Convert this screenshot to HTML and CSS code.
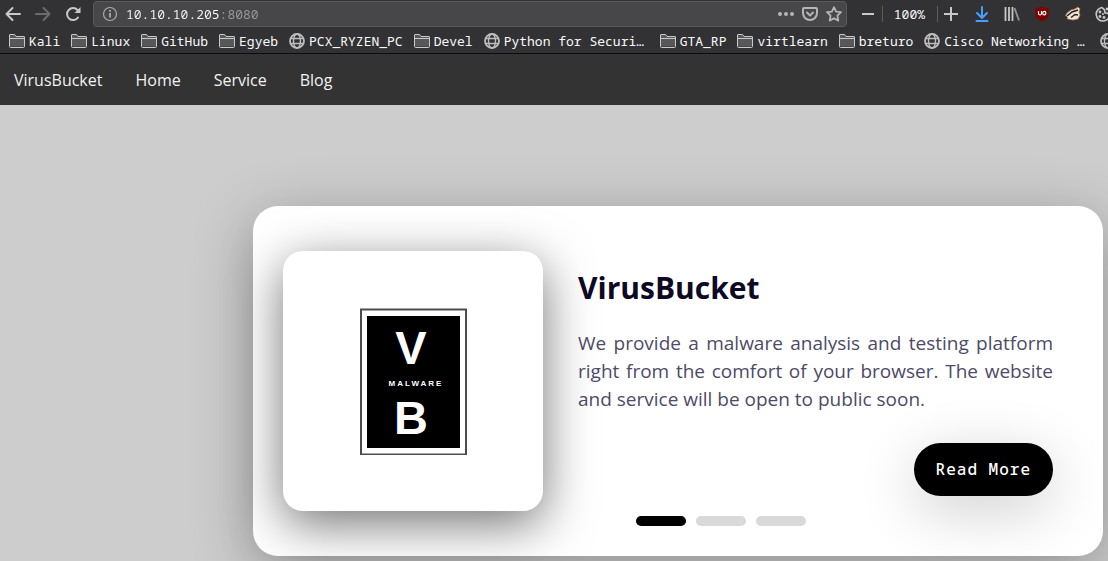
FILE: index.html
```html
<!DOCTYPE html>
<html lang="en">
<head>
<meta charset="utf-8">
<title>VirusBucket</title>
<link rel="stylesheet" href="styles.css">
</head>
<body>
<svg class="defs" width="0" height="0" aria-hidden="true">
  <symbol id="folder" viewBox="0 0 16 16"><path d="M.5 13.500V1.500H6L7.500 3.500H15.500V13.500Z" fill="#58585a"/><path d="M.5 5.500H15.500M.5 13.500V2Q.5 1.500 1 1.500H5.500L7 3.500H15Q15.500 3.500 15.500 4V13.500Q15.500 14.500 14.500 14.500H1.500Q.5 14.500.5 13.500Z" fill="none" stroke="#c8c8c9"/></symbol>
  <symbol id="globe" viewBox="0 0 16 16"><g fill="none" stroke="#bdbdbe" stroke-width="1.400"><circle cx="8" cy="8" r="7" stroke-width="1.800"/><ellipse cx="8" cy="8" rx="3.500" ry="7"/><path d="M1 5.500H15M1 10.500H15"/></g></symbol>
</svg>

<header class="browser">
  <div class="toolbar">
    <button class="tool" aria-label="Back"><svg width="16" height="16" viewBox="0 0 16 16"><path d="M15 8H1.500M7.500 2L1.500 8L7.500 14" fill="none" stroke="#c8c8c9" stroke-width="2" stroke-linecap="round" stroke-linejoin="round"/></svg></button>
    <button class="tool" aria-label="Forward" disabled><svg width="16" height="16" viewBox="0 0 16 16"><path d="M1 8H14.500M8.500 2L14.500 8L8.500 14" fill="none" stroke="#6c6c6e" stroke-width="2" stroke-linecap="round" stroke-linejoin="round"/></svg></button>
    <button class="tool" aria-label="Reload"><svg width="16" height="16" viewBox="0 0 16 16"><path d="M13 11.500A6 6 0 1 1 12.500 4" fill="none" stroke="#c8c8c9" stroke-width="2" stroke-linecap="round"/><path d="M15.500 1V7H9.500Z" fill="#c8c8c9"/></svg></button>
    <div class="address">
      <svg width="16" height="16" viewBox="0 0 16 16"><circle cx="8" cy="8" r="6.500" fill="none" stroke="#aaaaab" stroke-width="1.200"/><path d="M8 7V11.500M8 4V5.700" stroke="#aaaaab" stroke-width="1.800"/></svg>
      <input class="url" type="text" aria-label="Address" value="10.10.10.205:8080" spellcheck="false">
      <button class="tool" aria-label="Page actions"><svg width="16" height="16" viewBox="0 0 16 16" fill="#b5b5b6"><circle cx="2" cy="8" r="2"/><circle cx="8" cy="8" r="2"/><circle cx="14" cy="8" r="2"/></svg></button>
      <button class="tool" aria-label="Save to Pocket"><svg width="16" height="16" viewBox="0 0 16 16" fill="none" stroke="#b5b5b6" stroke-width="2" stroke-linecap="round" stroke-linejoin="round"><path d="M2 2H14Q15 2 15 3V7A7 7 0 0 1 1 7V3Q1 2 2 2Z"/><path d="M5 6.500L8 9.500L11 6.500"/></svg></button>
      <button class="tool" aria-label="Bookmark page"><svg width="16" height="16" viewBox="0 0 16 16"><path d="M8 1.200L10.100 5.600L15 6.200L11.400 9.600L12.300 14.600L8 12.200L3.700 14.600L4.600 9.600L1 6.200L5.900 5.600Z" fill="none" stroke="#b5b5b6" stroke-width="1.800" stroke-linejoin="round"/></svg></button>
    </div>
    <div class="zoom">
      <button class="tool" aria-label="Zoom out"><svg width="14" height="16" viewBox="0 0 14 16"><path d="M1 8H13" stroke="#c8c8c9" stroke-width="2"/></svg></button>
      <button class="level">100%</button>
      <button class="tool" aria-label="Zoom in"><svg width="14" height="16" viewBox="0 0 14 16"><path d="M0 8H14M7 1V15" stroke="#c8c8c9" stroke-width="2"/></svg></button>
    </div>
    <div class="extensions">
      <button class="tool" aria-label="Downloads"><svg width="16" height="16" viewBox="0 0 16 16" fill="none" stroke="#45a1ff" stroke-width="2" stroke-linecap="round" stroke-linejoin="round"><path d="M8 1V11M3 7L8 12L13 7M2.500 15H13.500"/></svg></button>
      <button class="tool" aria-label="Library"><svg width="16" height="16" viewBox="0 0 16 16" fill="none" stroke="#c8c8c9" stroke-width="1.800"><path d="M1.500 1V15M5 1V15M8.500 1V15"/><path d="M10.500 2L15 14.500" stroke="#949495"/></svg></button>
      <button class="tool" aria-label="uBlock"><svg width="16" height="16" viewBox="0 0 16 16"><path d="M8 .5Q11 2 14.500 2V8Q14.500 13 8 15.500Q1.500 13 1.500 8V2Q5 2 8 .5Z" fill="#800000"/><path d="M4.500 5V7.500Q4.500 9 6 9Q7.500 9 7.500 7.500V5" fill="none" stroke="#fff" stroke-width="1.200"/><rect x="8.800" y="5.300" width="3" height="3.500" rx="1.400" fill="none" stroke="#fff" stroke-width="1.200"/></svg></button>
      <button class="tool" aria-label="Privacy Badger"><svg width="17" height="16" viewBox="0 0 17 16"><path d="M1 11L3 7L7 4L11 3L14 1L16 3L15 6L16 9L14 13L9 14L4 13Z" fill="#efe6d9" stroke="#c77a40" stroke-width=".8"/><path d="M3 10L8 6L14 4" fill="none" stroke="#272321" stroke-width="1.600"/><path d="M7 11.500L11 8.500L14 9" fill="none" stroke="#272321" stroke-width="1.500"/><path d="M1 10.500L3 12" stroke="#272321" stroke-width="2"/></svg></button>
      <button class="tool" aria-label="Cookies"><svg width="16" height="16" viewBox="0 0 16 16"><path d="M7 1.500A6.800 6.800 0 1 0 14.800 8.500L12 7L10 7L9.500 4Z" fill="none" stroke="#c8c8c9" stroke-width="1.600"/><g fill="#c8c8c9"><circle cx="5" cy="6" r="1.400"/><circle cx="5" cy="10.500" r="1.400"/><circle cx="9" cy="11.500" r="1.400"/><circle cx="8" cy="8" r="1"/><circle cx="12" cy="3" r="1.400"/></g></svg></button>
    </div>
  </div>
  <nav class="bookmarks" aria-label="Bookmarks">
    <a href="#"><svg><use href="#folder"/></svg>Kali</a>
    <a href="#"><svg><use href="#folder"/></svg>Linux</a>
    <a href="#"><svg><use href="#folder"/></svg>GitHub</a>
    <a href="#"><svg><use href="#folder"/></svg>Egyeb</a>
    <a href="#"><svg><use href="#globe"/></svg>PCX_RYZEN_PC</a>
    <a href="#"><svg><use href="#folder"/></svg>Devel</a>
    <a class="long" href="#"><svg><use href="#globe"/></svg>Python for Securi…</a>
    <a href="#"><svg><use href="#folder"/></svg>GTA_RP</a>
    <a href="#"><svg><use href="#folder"/></svg>virtlearn</a>
    <a href="#"><svg><use href="#folder"/></svg>breturo</a>
    <a class="long" href="#"><svg><use href="#globe"/></svg>Cisco Networking …</a>
    <a href="#" aria-label="Bookmark"><svg><use href="#globe"/></svg></a>
  </nav>
</header>

<nav class="topnav">
  <a href="#">VirusBucket</a>
  <a href="#">Home</a>
  <a href="#">Service</a>
  <a href="#">Blog</a>
</nav>

<main class="stage">
  <article class="card">
    <div class="picture">
      <svg width="108" height="148" viewBox="0 0 108 148" role="img" aria-label="VB Malware logo">
        <rect x="2" y="2.500" width="105" height="145" fill="#fff" stroke="#4c4c4c" stroke-width="2"/>
        <rect x="8" y="9" width="93" height="132" fill="#000"/>
        <g class="logo-text" text-anchor="middle">
          <text class="logo-letter" x="52" y="57">V</text>
          <text class="logo-word" x="57" y="79">MALWARE</text>
          <text class="logo-letter" x="52" y="127">B</text>
        </g>
      </svg>
    </div>
    <div class="content">
      <h1>VirusBucket</h1>
      <p>We provide a malware analysis and testing platform right from the comfort of your browser. The website and service will be open to public soon.</p>
      <a class="more" href="#">Read More</a>
    </div>
    <div class="pages">
      <button class="page current" aria-label="Slide 1"></button>
      <button class="page" aria-label="Slide 2"></button>
      <button class="page" aria-label="Slide 3"></button>
    </div>
  </article>
</main>
</body>
</html>
```
FILE: styles.css
```css
* {
  box-sizing: border-box;
}

body {
  margin: 0;
  min-height: 100vh;
  display: flex;
  flex-direction: column;
  overflow: hidden;
  background: #cdcdcd;
  font-family: "Open Sans", "Noto Sans", sans-serif;
}

.defs {
  position: absolute;
}

a {
  color: inherit;
  text-decoration: none;
}

button {
  border: 0;
  padding: 0;
  background: none;
  color: inherit;
  font: inherit;
}

svg {
  display: block;
  flex: none;
}

/* Browser chrome */
.browser {
  overflow: hidden;
  background: #323234;
  border-bottom: 1px solid #0c0c0d;
  color: #f9f9fa;
  font: 13px/18px "Noto Sans Mono", "DejaVu Sans Mono", monospace;
}

.toolbar {
  display: flex;
  align-items: center;
  gap: 14px;
  height: 28px;
  padding-left: 5px;
}

.tool {
  flex: none;
}

.address {
  flex: 1;
  min-width: 0;
  display: flex;
  align-items: center;
  gap: 8px;
  height: 26px;
  margin-left: -2px;
  padding: 0 4px 0 8px;
  background: #474749;
  border: 1px solid #5a5a5c;
  border-radius: 4px;
}

.url {
  flex: 1;
  min-width: 0;
  padding: 0;
  border: 0;
  outline: 0;
  background: linear-gradient(90deg, #f9f9fa 12ch, #9a9a9b 12ch);
  -webkit-background-clip: text;
  background-clip: text;
  color: transparent;
  font: inherit;
}

.zoom {
  display: flex;
  align-items: center;
}

.level {
  height: 16px;
  margin: 0 6px 0 7px;
  padding: 0 12px 0 11px;
  border: solid #5c5c5e;
  border-width: 0 1px;
  line-height: 16px;
}

.extensions {
  display: flex;
  gap: 14px;
  width: 134px;
  margin-left: 2px;
}

.bookmarks {
  display: flex;
  gap: 11px;
  height: 25px;
  padding-left: 9px;
  white-space: nowrap;
}

.bookmarks a {
  flex: none;
  display: flex;
  align-items: center;
  gap: 4px;
}

.bookmarks .long {
  width: 165px;
}

.bookmarks svg {
  width: 16px;
  height: 16px;
}

/* Site navigation */
.topnav {
  display: flex;
  gap: 33px;
  padding: 15px 14px 13px;
  background: #333;
  color: #f2f2f2;
  font-size: 16px;
  line-height: 23px;
}

/* Slider card */
.stage {
  flex: 1;
  display: flex;
  justify-content: flex-end;
  align-items: flex-start;
  padding: 101px 5px 5px;
}

.card {
  width: 100%;
  max-width: 850px;
  display: grid;
  grid-template-columns: 260px 1fr;
  gap: 5px 35px;
  padding: 45px 50px 30px 30px;
  background: #fff;
  border-radius: 25px;
  box-shadow: 0 14px 60px rgba(0, 0, 0, .3);
}

.picture {
  display: grid;
  place-items: center;
  height: 260px;
  background: #fff;
  border-radius: 20px;
  box-shadow: 0 13px 50px rgba(0, 0, 0, .55);
}

.logo-text {
  fill: #fff;
  font-family: "Liberation Sans", sans-serif;
  font-weight: 700;
}

.logo-letter {
  font-size: 47px;
}

.logo-word {
  font-size: 8px;
  letter-spacing: 2px;
}

.content {
  display: flex;
  flex-direction: column;
  align-items: flex-end;
  position: relative;
  padding-top: 16px;
}

h1 {
  width: 100%;
  margin: 0 0 20px;
  color: #0d0925;
  font-size: 30px;
  line-height: 42px;
}

p {
  margin: 0 0 30px;
  color: #4e4a67;
  font-size: 19px;
  line-height: 28px;
  text-align: justify;
}

.more {
  padding: 16px 22px;
  background: #000;
  border-radius: 27px;
  box-shadow: 0 14px 60px rgba(0, 0, 0, .2);
  color: #fff;
  font: 500 16px/21px "Noto Sans Mono", "DejaVu Sans Mono", monospace;
  letter-spacing: 1px;
}

.pages {
  grid-column: 2;
  display: flex;
  gap: 10px;
  padding-left: 58px;
  position: relative;
}

.page {
  width: 50px;
  height: 10px;
  border-radius: 5px;
  background: #d9d9d9;
}

.page.current {
  background: #000;
}
```
